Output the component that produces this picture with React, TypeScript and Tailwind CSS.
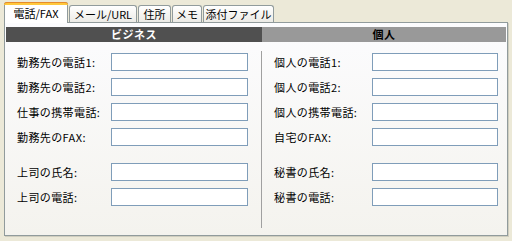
import React from "react";

const font = { fontFamily: '"Noto Sans CJK JP", "Noto Sans", sans-serif' };

function Row({ label, labelW, inputW }: { label: string; labelW: string; inputW: string }) {
  return (
    <div className="flex items-center h-[18px]">
      <div className={`${labelW} text-[11px] leading-none tracking-[0.4px] text-black whitespace-nowrap`}>{label}</div>
      <div className={`${inputW} h-[18px] border border-[#7F9DB9] bg-white`} />
    </div>
  );
}

export default function App() {
  const left = [
    ["勤務先の電話1:", "勤務先の電話2:", "仕事の携帯電話:", "勤務先のFAX:"],
    ["上司の氏名:", "上司の電話:"],
  ];
  const right = [
    ["個人の電話1:", "個人の電話2:", "個人の携帯電話:", "自宅のFAX:"],
    ["秘書の氏名:", "秘書の電話:"],
  ];
  return (
    <div className="w-[512px] h-[241px] bg-[#ECE9D8] overflow-hidden" style={font}>
      {/* tabs */}
      <div className="flex items-end h-[22px] pl-[4px]">
        <div className="relative z-10 -mb-px w-[64px] h-[21px] bg-white border border-b-0 border-[#919B9C] rounded-t-[3px] flex flex-col">
          <div className="h-[3px] -mx-px -mt-px bg-[#FFC83C] border-t border-[#E68B2C] rounded-t-[3px]" />
          <div className="flex-1 flex items-center justify-center text-[11px] leading-none text-black pb-[1px]">電話/FAX</div>
        </div>
        <div className="ml-[1px] w-[68px] h-[17px] border border-b-0 border-[#919B9C] rounded-t-[3px] bg-gradient-to-b from-white to-[#ECEBE6] flex items-center justify-center text-[11px] leading-none text-black">メール/URL</div>
        <div className="ml-[1px] w-[33px] h-[17px] border border-b-0 border-[#919B9C] rounded-t-[3px] bg-gradient-to-b from-white to-[#ECEBE6] flex items-center justify-center text-[11px] leading-none text-black">住所</div>
        <div className="ml-[1px] w-[30px] h-[17px] border border-b-0 border-[#919B9C] rounded-t-[3px] bg-gradient-to-b from-white to-[#ECEBE6] flex items-center justify-center text-[11px] leading-none text-black">メモ</div>
        <div className="ml-[1px] w-[71px] h-[17px] border border-b-0 border-[#919B9C] rounded-t-[3px] bg-gradient-to-b from-white to-[#ECEBE6] flex items-center justify-center text-[11px] leading-none text-black">添付ファイル</div>
      </div>
      {/* panel */}
      <div className="ml-[4px] w-[504px] h-[214px] border border-[#919B9C] shadow-[1px_1px_0_#D0CEBF] bg-gradient-to-b from-[#FCFCFE] to-[#F4F3EE] pt-[4px] px-[1px] flex flex-col">
        <div className="flex h-[15px] text-[11px] font-bold leading-none tracking-[0.5px]">
          <div className="w-[256px] bg-[#505050] text-white flex items-center justify-center">ビジネス</div>
          <div className="flex-1 bg-[#999999] text-black flex items-center justify-center">個人</div>
        </div>
        <div className="flex flex-1">
          <div className="w-[255px] pl-[11px] pt-[11px] flex flex-col">
            <div className="flex flex-col gap-[7px]">
              {left[0].map((l) => (
                <Row key={l} label={l} labelW="w-[94px]" inputW="w-[137px]" />
              ))}
            </div>
            <div className="flex flex-col gap-[7px] mt-[17px]">
              {left[1].map((l) => (
                <Row key={l} label={l} labelW="w-[94px]" inputW="w-[137px]" />
              ))}
            </div>
          </div>
          <div className="w-px bg-[#A0A0A0] mt-[9px] h-[177px]" />
          <div className="flex-1 pl-[12px] pt-[11px] flex flex-col">
            <div className="flex flex-col gap-[7px]">
              {right[0].map((l) => (
                <Row key={l} label={l} labelW="w-[98px]" inputW="w-[126px]" />
              ))}
            </div>
            <div className="flex flex-col gap-[7px] mt-[17px]">
              {right[1].map((l) => (
                <Row key={l} label={l} labelW="w-[98px]" inputW="w-[126px]" />
              ))}
            </div>
          </div>
        </div>
      </div>
    </div>
  );
}
